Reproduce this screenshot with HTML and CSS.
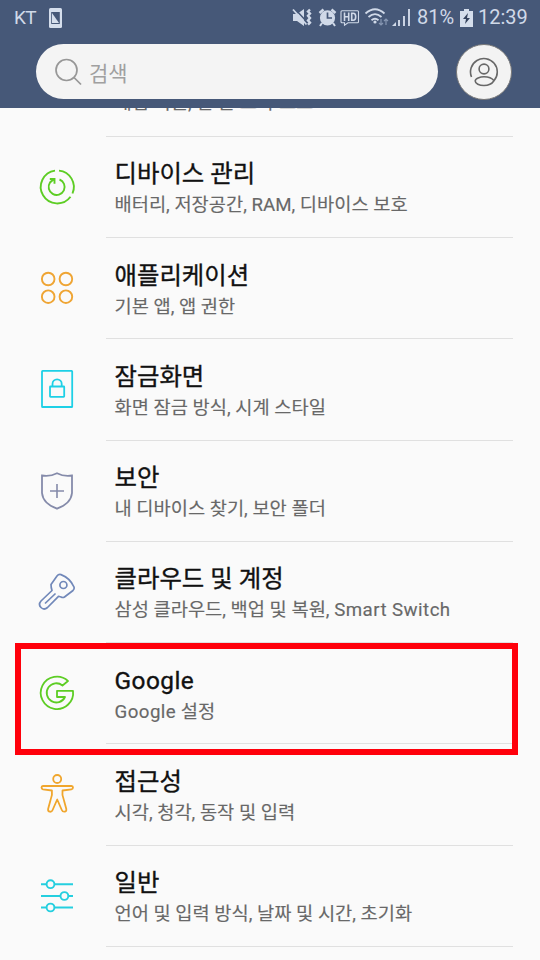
FILE: index.html
```html
<!DOCTYPE html>
<html lang="ko">
<head>
<meta charset="utf-8">
<title>설정</title>
<link rel="stylesheet" href="styles.css">
</head>
<body>
<header class="header">
  <div class="status">
    <span class="carrier">KT</span>
    <svg class="sim" width="13" height="20" viewBox="0 0 13 20"><rect width="13" height="20" rx="1.5" fill="#d5deec"/><rect x="2.2" y="4" width="8.6" height="12" fill="#465878"/><path d="M3 5V15H10Z" fill="#d5deec"/></svg>
    <svg class="tray" width="126" height="28" viewBox="290 4 126 28" fill="none" stroke="#d0d9e8" stroke-width="1.8">
      <path d="M293 14h4l7-5v17l-7-5h-4z" fill="#d0d9e8" stroke="none"/>
      <path d="M294.500 8.500l13 14" stroke="#465878" stroke-width="1.600"/><path d="M293 9.500l13.500 15" stroke-width="1.800"/>
      <path d="M310 9.500l-2 2 2 2-2 2.300 2 2.300-2 2.300 2 2.300-2 2" stroke-width="2.400"/>
      <circle cx="327.500" cy="17.800" r="7.600" fill="#d0d9e8" stroke="none"/>
      <path d="M319.500 13l4-3.500M335.500 13l-4-3.500" stroke-width="2.500"/><path d="M322 23l-2 3M333 23l2 3" stroke-width="2"/>
      <path d="M327.500 12.500v5.500h4.500" stroke="#465878" stroke-width="1.700"/>
      <path d="M342 10.700h15.500q1 0 1 1v10q0 1-1 1H348l-3.500 2.500v-2.500H342q-1 0-1-1v-10q0-1 1-1z" stroke-width="1.100"/>
      <path d="M344.500 12.500v8.500M348.700 12.500v8.500M344.500 16.700h4.200M351.700 13.200v7h1.500q2.500 0 2.500-3.500t-2.500-3.500z" stroke-width="1.600"/>
      <path d="M365.500 13.500q9.500-8.500 19 0M368.500 17q6.500-5.700 13 0M371.500 20.200q3.500-3 7 0"/><circle cx="375" cy="22" r="1.600" fill="#d0d9e8" stroke="none"/>
      <g stroke="#8797b3" stroke-width="1.200"><path d="M381 19v6M379 23l2 2 2-2M386 25v-6M384 21l2-2 2 2"/></g>
      <path d="M392 26l4-4v4z" fill="#d0d9e8" stroke="none"/><path d="M399 26v-6M404 26v-10M409 26V9" stroke-width="1.900"/>
    </svg>
    <span class="percent">81%</span>
    <svg class="battery" width="13" height="18" viewBox="0 0 13 18"><path d="M4 0h5v2h4v16H0V2h4z" fill="#d5deec"/><path d="M8 4L3 10h3l-1 5 5-6H7z" fill="#34425d"/></svg>
    <span class="clock">12:39</span>
  </div>
  <div class="tools">
    <div class="search">
      <svg width="28" height="28" viewBox="0 0 28 28" fill="none" stroke="#979797" stroke-width="1.700"><circle cx="11.500" cy="12" r="10.500"/><path d="M19 19.500l7 7"/></svg>
      <span>검색</span>
    </div>
    <div class="profile">
      <svg width="30" height="30" viewBox="0 0 30 30" fill="none" stroke="#686868" stroke-width="1.600"><path d="M2.500 20A13.400 13.400 0 1 1 25 23.700"/><circle cx="15" cy="12" r="4.900"/><path d="M25 23.700C23 21 19 19.800 15 19.800S6.200 21.500 6.200 24s4 4.500 8.800 4.500 8-1.800 10-4.800"/></svg>
    </div>
  </div>
</header>
<main class="list">
  <section class="row partial"><div class="icon"></div><div class="text"><p>게임 지원, 한 손 조작 모드</p></div></section>
  <section class="row">
    <div class="icon"><svg width="40" height="40" viewBox="0 0 40 40" fill="none" stroke="#5dcd24" stroke-width="1.900"><path d="M18 3.600A16.500 16.500 0 1 0 33.500 29.800M22 3.600A16.500 16.500 0 0 1 35.500 26.500M22.500 12.500A8 8 0 1 1 13 15.500L17 12M12.800 12h4.700v4.700"/></svg></div>
    <div class="text"><h2>디바이스 관리</h2><p>배터리, 저장공간, RAM, 디바이스 보호</p></div>
  </section>
  <section class="row">
    <div class="icon"><svg width="40" height="40" viewBox="0 0 40 40" fill="none" stroke="#efa534" stroke-width="1.900"><circle cx="11.200" cy="11" r="6.300"/><circle cx="28.900" cy="11" r="6.300"/><circle cx="11.200" cy="28.700" r="6.300"/><circle cx="28.900" cy="28.700" r="6.300"/></svg></div>
    <div class="text"><h2>애플리케이션</h2><p>기본 앱, 앱 권한</p></div>
  </section>
  <section class="row">
    <div class="icon"><svg width="40" height="40" viewBox="0 0 40 40" fill="none" stroke="#1ed0e6" stroke-width="1.800"><rect x="5" y="1.800" width="30.200" height="36.200" rx=".6"/><rect x="13" y="17.500" width="14.200" height="10.300" rx=".5"/><path d="M15.500 17.500V15a4.600 4.600 0 0 1 9.200 0v2.500"/></svg></div>
    <div class="text"><h2>잠금화면</h2><p>화면 잠금 방식, 시계 스타일</p></div>
  </section>
  <section class="row">
    <div class="icon"><svg width="40" height="40" viewBox="0 0 40 40" fill="none" stroke="#858baa" stroke-width="1.800"><path d="M20 2.200Q13 5.800 5 4.500V22Q6 32.500 20 37.700Q34 32.500 35 22V4.500Q27 5.800 20 2.200Z"/><path d="M20 13v14M13 20h14" stroke-width="1.600"/></svg></div>
    <div class="text"><h2>보안</h2><p>내 디바이스 찾기, 보안 폴더</p></div>
  </section>
  <section class="row">
    <div class="icon"><svg width="40" height="40" viewBox="0 0 40 40" fill="none" stroke="#7188b9" stroke-width="1.700" stroke-linejoin="round"><path d="M14 12.500L20 4q1.500-2 4-1.400Q33 6 37 15q.6 2-1 3.500L27.500 25q-1.500 1-3.500 0l-2.500-.7L10.500 35.500Q7 38.500 4 35.500T4 29L15 18.500q-1-3-1-6z"/><circle cx="26.400" cy="13" r="3.500"/><path d="M8 31.500L18.500 21.500" stroke-width="1.700"/></svg></div>
    <div class="text"><h2>클라우드 및 계정</h2><p>삼성 클라우드, 백업 및 복원, <span class="latin">Smart Switch</span></p></div>
  </section>
  <section class="row">
    <div class="icon"><svg width="40" height="40" viewBox="0 0 40 40" fill="none" stroke="#5dcd24" stroke-width="1.800" stroke-linejoin="round"><path d="M31 8A16.200 16.200 0 1 0 36 17.800H20v6.200h8A9.600 9.600 0 1 1 25.500 12.500Z"/></svg></div>
    <div class="text"><h2 class="latin">Google</h2><p><span class="latin">Google</span> 설정</p></div>
  </section>
  <section class="row">
    <div class="icon"><svg width="40" height="40" viewBox="0 0 40 40" fill="none" stroke="#f0a62d" stroke-width="1.800" stroke-linejoin="round"><circle cx="20.200" cy="5" r="4"/><path d="M6 12H34.500q1.500 0 1.500 1.600t-1.500 1.700L25.500 16.500q-.8 4.500 1.500 10l2.300 8.500q.3 2.500-1.700 2.700t-2.800-1.700L20.200 25.500 15.600 36q-.8 2-2.800 1.700T11.100 35l2.300-8.500q2.300-5.500 1.500-10L6 15.300Q4.500 15 4.500 13.600T6 12z"/></svg></div>
    <div class="text"><h2>접근성</h2><p>시각, 청각, 동작 및 입력</p></div>
  </section>
  <section class="row">
    <div class="icon"><svg width="40" height="40" viewBox="0 0 40 40" fill="none" stroke="#25cfdf" stroke-width="1.900"><path d="M4 8.200h5.500M17.500 8.200H36M4 20h19.500M31.500 20H36M4 31.500h5.500M17.500 31.500H36"/><circle cx="13.500" cy="8.200" r="3.900"/><circle cx="27.400" cy="20" r="3.900"/><circle cx="13.500" cy="31.500" r="3.900"/></svg></div>
    <div class="text"><h2>일반</h2><p>언어 및 입력 방식, 날짜 및 시간, 초기화</p></div>
  </section>
  <div class="highlight"></div>
</main>
</body>
</html>
```

FILE: styles.css
```css
* { box-sizing: border-box; }
body {
  margin: 0;
  width: 540px;
  height: 960px;
  overflow: hidden;
  display: flex;
  flex-direction: column;
  background: #fafafa;
  font-family: Roboto, "Noto Sans CJK KR", sans-serif;
}
svg { display: block; flex: none; }
.header { height: 108px; flex: none; background: #465878; }
.status {
  height: 35px;
  display: flex;
  align-items: center;
  padding-left: 14px;
  color: #d0d9e8;
  font-size: 20px;
  line-height: 35px;
  white-space: nowrap;
}
.carrier { width: 35px; font-size: 19px; letter-spacing: -.6px; }
.tray { margin-left: 228px; }
.percent { width: 43px; margin-left: 1px; }
.clock { margin-left: 5px; }
.tools { display: flex; padding: 9px 28px 0 36px; justify-content: space-between; }
.search {
  width: 402px;
  height: 55px;
  border-radius: 28px;
  background: #f4f4f4;
  display: flex;
  align-items: center;
  gap: 6px;
  padding-left: 19px;
  color: #a0a0a0;
  font-size: 21px;
}
.profile {
  width: 56px;
  height: 56px;
  border-radius: 50%;
  border: 1px solid #777;
  background: #f3f3f3;
  display: grid;
  place-items: center;
}
.list { position: relative; flex: 1; min-height: 0; overflow: hidden; }
.row { display: flex; height: 101.250px; }
.row.partial { height: 28.800px; }
.icon { width: 106px; flex: none; display: flex; padding: 30px 0 0 37px; }
.text {
  width: 407px;
  padding: 19.500px 0 0 8.500px;
  border-bottom: 1px solid #e0e0e0;
  white-space: nowrap;
}
h2 {
  margin: 0;
  font-size: 24.400px;
  line-height: 36px;
  font-weight: 400;
  color: #111;
  -webkit-text-stroke: .35px #111;
}
p {
  margin: 0;
  font-size: 18.700px;
  line-height: 26px;
  color: #686868;
  -webkit-text-stroke: .15px #686868;
}
.latin { letter-spacing: .45px; }
.partial .text { padding-top: 0; }
.partial p { margin-top: -18px; }
.highlight {
  position: absolute;
  left: 15px;
  top: 535px;
  width: 503px;
  height: 112px;
  border: 6px solid #ff000b;
}
```
